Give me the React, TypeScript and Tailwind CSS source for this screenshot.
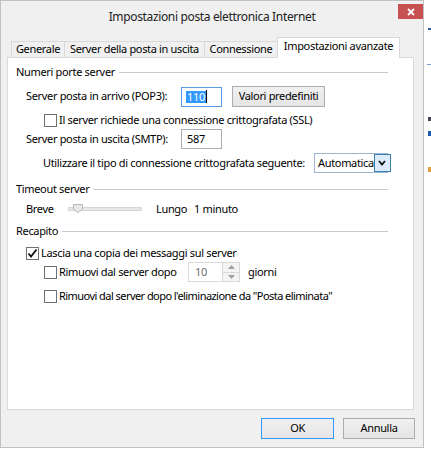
import React from 'react'

// finestra di dialogo "Impostazioni posta elettronica Internet" (stile Windows 8)

function Check({ checked = false }: { checked?: boolean }) {
  return (
    <span className="w-[13px] h-[13px] border border-[#707070] bg-white flex items-center justify-center shrink-0">
      {checked && (
        <svg width="11" height="11" viewBox="0 0 11 11">
          <path d="M1.5 5.5 L4 8.5 L9.5 1.5" fill="none" stroke="#111" strokeWidth="1.8" />
        </svg>
      )}
    </span>
  )
}

function GroupHeader({ label }: { label: string }) {
  return (
    <div className="flex items-center h-[14px] pl-[8px] pr-[25px]">
      <span className="whitespace-nowrap">{label}</span>
      <span className="flex-1 h-px bg-[#c9c9c9] ml-[4px]" />
    </div>
  )
}

function Tab({ label, className }: { label: string; className: string }) {
  return (
    <div className={`flex items-center justify-center whitespace-nowrap border-[#d9d9d9] ${className}`}>
      {label}
    </div>
  )
}

export default function App() {
  return (
    <div className="relative w-[431px] h-[450px] bg-white overflow-hidden font-['Noto_Sans',sans-serif] text-[11px] tracking-[-0.33px] text-black">
      {/* finestra */}
      <div className="relative w-[424px] h-[448px] bg-[#f0f0f0] border-t border-r border-b border-l border-[#c2c2c2] flex flex-col">
        {/* barra del titolo */}
        <div className="h-[31px] flex items-center justify-center text-[12px] tracking-[-0.35px] text-[#222]">
          Impostazioni posta elettronica Internet
        </div>
        <button className="absolute top-[3px] right-0 w-[25px] h-[15px] bg-[#c75050] flex items-center justify-center">
          <svg width="8" height="8" viewBox="0 0 8 8">
            <path d="M1 1 L7 7 M7 1 L1 7" stroke="#fff" strokeWidth="1.8" />
          </svg>
        </button>

        {/* schede */}
        <div className="mt-[5px] h-[20px] flex items-end pl-[10px]">
          <Tab label="Generale" className="w-[54px] h-[16px] border-l border-t border-r bg-[#f0f0f0]" />
          <Tab label="Server della posta in uscita" className="w-[140px] h-[16px] border-t border-r bg-[#f0f0f0]" />
          <Tab label="Connessione" className="w-[72px] h-[16px] border-t bg-[#f0f0f0]" />
          <Tab
            label="Impostazioni avanzate"
            className="relative z-10 w-[123px] h-[21px] -mb-px border-l border-t border-r bg-white pb-[3px]"
          />
        </div>

        {/* pannello */}
        <div className="ml-[6px] w-[407px] h-[353px] bg-white border border-[#d9d9d9] flex flex-col">
          <div className="mt-[7px]">
            <GroupHeader label="Numeri porte server" />
          </div>

          <div className="mt-[7px] h-[21px] flex items-center pl-[18px]">
            <span className="w-[155px] whitespace-nowrap">Server posta in arrivo (POP3):</span>
            <div className="w-[41px] h-[20px] border border-[#569de5] bg-white flex items-center pl-[4px]">
              <span className="bg-[#3399ff] text-white leading-[12px] px-[1px]">110</span>
              <span className="w-px h-[13px] bg-black" />
            </div>
            <button className="ml-[10px] w-[93px] h-[21px] border border-[#acacac] bg-gradient-to-b from-[#f0f0f0] to-[#e5e5e5] flex items-center justify-center">
              Valori predefiniti
            </button>
          </div>

          <div className="mt-[6px] h-[14px] flex items-center pl-[36px] gap-[2px]">
            <Check />
            <span className="whitespace-nowrap">Il server richiede una connessione crittografata (SSL)</span>
          </div>

          <div className="mt-[2px] h-[20px] flex items-center pl-[18px]">
            <span className="w-[155px] whitespace-nowrap">Server posta in uscita (SMTP):</span>
            <div className="w-[41px] h-[20px] border border-[#abadb3] bg-white flex items-center pl-[5px]">587</div>
          </div>

          <div className="mt-[4px] h-[20px] flex items-center pl-[35px]">
            <span className="w-[271px] whitespace-nowrap">Utilizzare il tipo di connessione crittografata seguente:</span>
            <div className="w-[74px] h-[20px] border border-[#9fb6d1] bg-white flex items-center">
              <span className="flex-1 whitespace-nowrap pl-[3px]">Automatica</span>
              <span className="w-[17px] h-[18px] bg-[#dcecfc] border border-[#3c7fb1] flex items-center justify-center shrink-0">
                <svg width="8" height="6" viewBox="0 0 8 6">
                  <path d="M1 1 L4 4.5 L7 1" fill="none" stroke="#111" strokeWidth="1.8" />
                </svg>
              </span>
            </div>
          </div>

          <div className="mt-[9px]">
            <GroupHeader label="Timeout server" />
          </div>

          <div className="mt-[6px] h-[14px] flex items-center pl-[18px]">
            <span className="w-[42px]">Breve</span>
            <div className="relative w-[74px] h-[4px] border border-[#d6d6d6] bg-[#e7e7e7]">
              <svg className="absolute left-[4px] -top-[4px]" width="10" height="9" viewBox="0 0 10 9">
                <polygon points="0.5,0.5 9.5,0.5 9.5,5 5,8.5 0.5,5" fill="#e9e9e9" stroke="#b5b5b5" />
              </svg>
            </div>
            <span className="ml-[14px] w-[38px]">Lungo</span>
            <span>1 minuto</span>
          </div>

          <div className="mt-[8px]">
            <GroupHeader label="Recapito" />
          </div>

          <div className="mt-[8px] h-[14px] flex items-center pl-[18px] gap-[2px]">
            <Check checked />
            <span className="whitespace-nowrap">Lascia una copia dei messaggi sul server</span>
          </div>

          <div className="mt-[2px] h-[20px] flex items-center pl-[36px]">
            <Check />
            <span className="ml-[2px] w-[129px] whitespace-nowrap">Rimuovi dal server dopo</span>
            <div className="w-[52px] h-[20px] border border-[#d9d9d9] bg-white flex">
              <span className="flex-1 flex items-center pl-[6px] text-[#6d6d6d]">10</span>
              <span className="w-[17px] flex flex-col border-l border-[#d9d9d9]">
                <span className="flex-1 flex items-center justify-center bg-[#f4f4f4] border-b border-[#d9d9d9]">
                  <svg width="7" height="4" viewBox="0 0 7 4">
                    <polygon points="0,4 3.5,0 7,4" fill="#a0a0a0" />
                  </svg>
                </span>
                <span className="flex-1 flex items-center justify-center bg-[#f4f4f4]">
                  <svg width="7" height="4" viewBox="0 0 7 4">
                    <polygon points="0,0 3.5,4 7,0" fill="#a0a0a0" />
                  </svg>
                </span>
              </span>
            </div>
            <span className="ml-[8px]">giorni</span>
          </div>

          <div className="mt-[7px] h-[14px] flex items-center pl-[36px] gap-[2px]">
            <Check />
            <span className="whitespace-nowrap tracking-[-0.55px]">
              Rimuovi dal server dopo l'eliminazione da "Posta eliminata"
            </span>
          </div>
        </div>

        {/* pulsanti */}
        <div className="mt-[8px] flex justify-end pr-[8px] gap-[9px]">
          <button className="w-[73px] h-[21px] border border-[#3399ff] bg-gradient-to-b from-[#f0f0f0] to-[#e5e5e5] flex items-center justify-center">
            OK
          </button>
          <button className="w-[72px] h-[21px] border border-[#acacac] bg-gradient-to-b from-[#f0f0f0] to-[#e5e5e5] flex items-center justify-center">
            Annulla
          </button>
        </div>
      </div>

      {/* sfondo del desktop dietro la finestra */}
      <span className="absolute left-[428px] top-[28px] w-[3px] h-[2px] bg-[#2a5fa8]" />
      <span className="absolute left-[427px] top-[64px] w-[4px] h-[1px] bg-[#7a9cc7]" />
      <span className="absolute left-[428px] top-[117px] w-[3px] h-[4px] bg-[#445]" />
      <span className="absolute left-[428px] top-[131px] w-[3px] h-[5px] bg-[#1f5cb0]" />
      <span className="absolute left-[428px] top-[167px] w-[3px] h-[5px] bg-[#e0a040]" />
    </div>
  )
}
